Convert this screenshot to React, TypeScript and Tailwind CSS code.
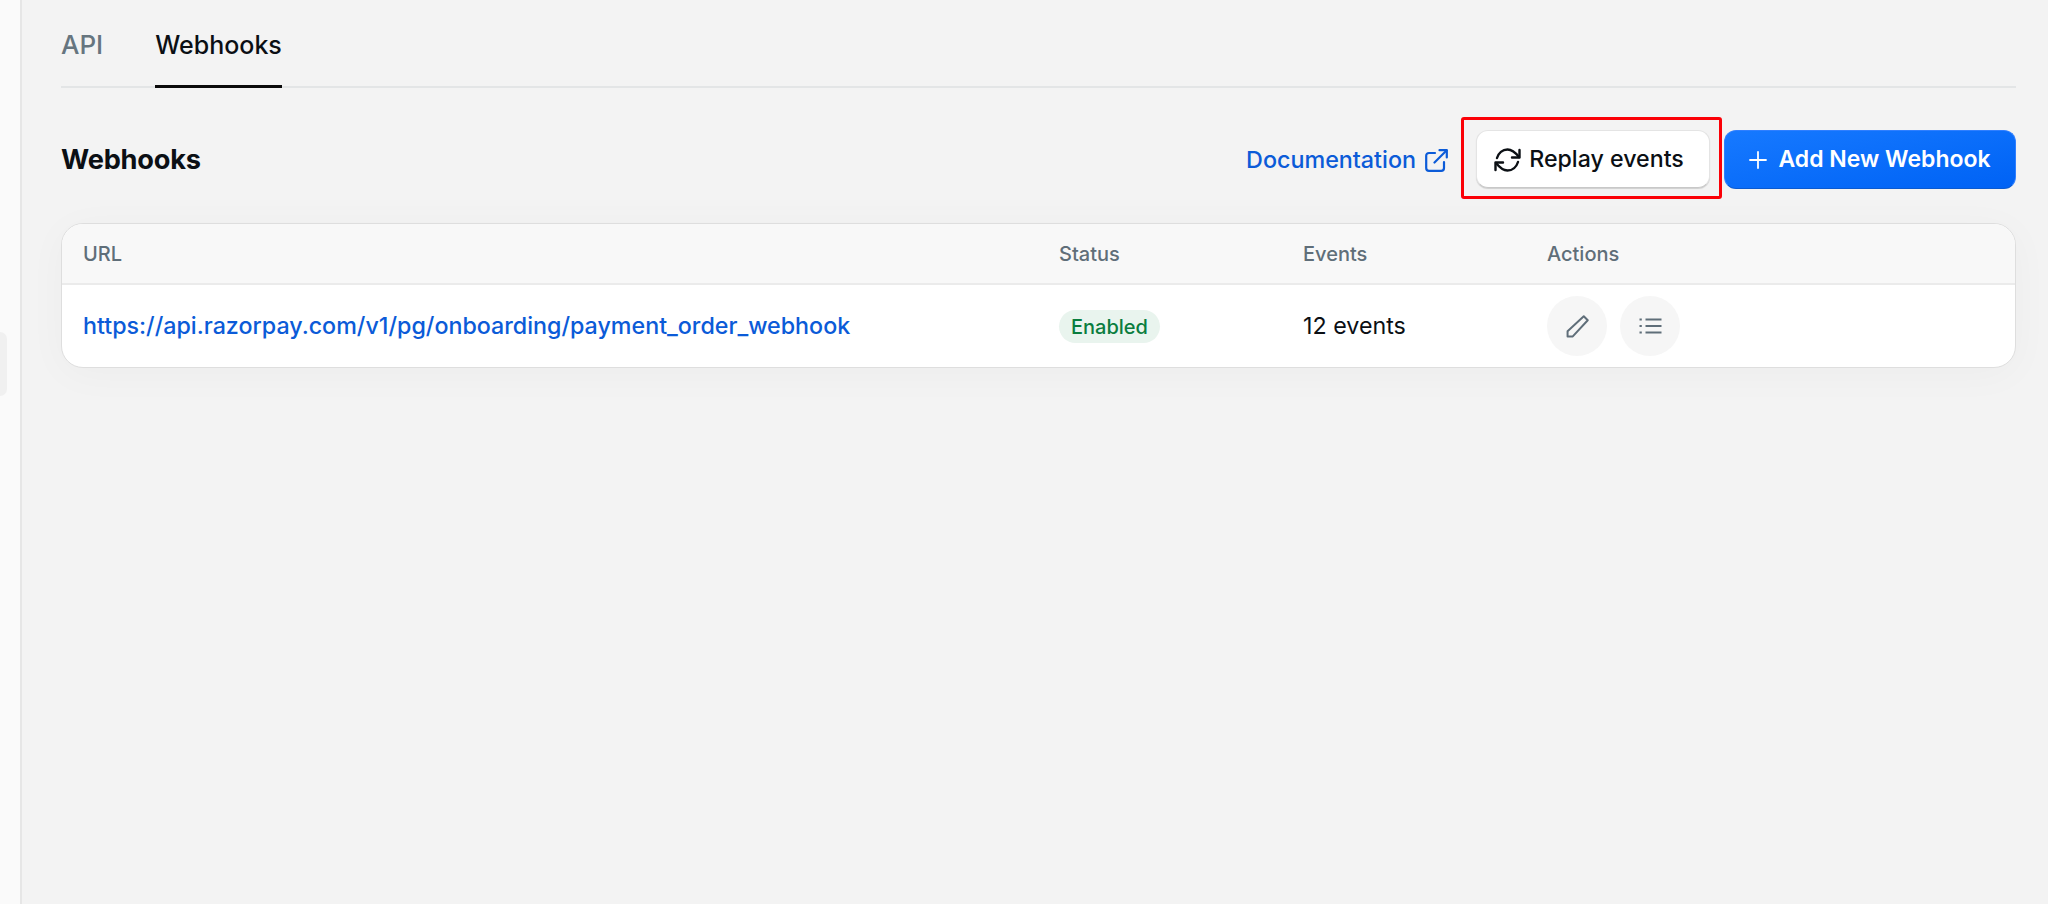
import React from "react";

const rowCols = "grid grid-cols-[975px_244px_244px_1fr]";

function SyncIcon() {
  return (
    <svg width="27" height="24" viewBox="0 0 26 24" fill="none" stroke="currentColor" strokeWidth="2.4" strokeLinecap="round" strokeLinejoin="round">
      <path d="M2.5 10C4 5 8 1.5 13 1.5C17.5 1.5 20.5 4 24.5 9" />
      <path d="M25 2V9.5H17.5" />
      <path d="M23.5 14C22 19 18 22.5 13 22.5C8.5 22.5 5.5 20 1.5 15" />
      <path d="M1 22V14.5H8.5" />
    </svg>
  );
}

function ExternalIcon() {
  return (
    <svg width="23" height="23" viewBox="0 0 23 23" fill="none" stroke="currentColor" strokeWidth="2.2" strokeLinecap="round" strokeLinejoin="round">
      <path d="M10 4H4C2.3 4 1.2 5.1 1.2 6.8V19C1.2 20.7 2.3 21.8 4 21.8H16.2C17.9 21.8 19 20.7 19 19V13" />
      <path d="M14.5 1.2H21.8V8.5" />
      <path d="M9.5 13.5L21.5 1.5" />
    </svg>
  );
}

function PencilIcon() {
  return (
    <svg width="23" height="23" viewBox="0 0 22 22" fill="none" stroke="currentColor" strokeWidth="1.9" strokeLinejoin="round">
      <path d="M17 1.2L20.8 5L6.5 20.5H1.5V15.5Z" />
    </svg>
  );
}

function ListIcon() {
  return (
    <svg width="23" height="16" viewBox="0 0 23 16" fill="none" stroke="currentColor" strokeWidth="1.9">
      <path d="M6.5 1.5H22.5M6.5 8H22.5M6.5 14.5H22.5" />
      <path d="M0.5 1.5H2.8M0.5 8H2.8M0.5 14.5H2.8" />
    </svg>
  );
}

function PlusIcon() {
  return (
    <svg width="18" height="18" viewBox="0 0 18 18" fill="none" stroke="currentColor" strokeWidth="1.8" strokeLinecap="round">
      <path d="M9 1V17M1 9H17" />
    </svg>
  );
}

export default function App() {
  return (
    <div className="flex h-[904px] w-[2048px] overflow-hidden bg-[#f3f3f3] font-['Inter',sans-serif] text-[#0b0f14]">
      <aside className="w-[22px] shrink-0 border-r-2 border-[#e6e6e6] bg-[#fafafa] pt-[332px]">
        <div className="h-[64px] w-[7px] rounded-r-lg bg-[#f0f0f0]" />
      </aside>
      <main className="w-[1994px] pl-[39px]">
        <div className="flex h-[88px] gap-[52px] border-b-2 border-[#e3e5e6]">
          <div className="pt-[27px] text-[26px] leading-[36px] font-medium text-[#66757f]">API</div>
          <div className="-mb-[2px] h-[88px] border-b-[3px] border-[#0a0a0a] pt-[27px] text-[25px] leading-[36px] font-medium">Webhooks</div>
        </div>

        <div className="mt-[42px] flex h-[58px] items-center justify-between">
          <h1 className="pt-[2px] text-[27.2px] font-bold tracking-[-0.2px]">Webhooks</h1>
          <div className="flex items-center">
            <a className="flex items-center gap-[9px] pt-[2px] text-[23.3px] font-medium text-[#0b5bd8]">
              Documentation
              <ExternalIcon />
            </a>
            <div className="relative ml-[28px]">
              <button className="flex h-[58px] w-[234px] items-center justify-center gap-[8px] rounded-xl border border-[#e4e4e4] border-b-[#c8c8c8] bg-white pt-[1px] pr-[8px] text-[23.2px] font-medium shadow-[0_1px_1px_rgba(0,0,0,0.15)]">
                <SyncIcon />
                Replay events
              </button>
              <div className="absolute -top-[13px] -right-[12px] -bottom-[11px] -left-[15px] rounded-[3px] border-[3px] border-[#fb0007]" />
            </div>
            <button className="ml-[14px] flex h-[59px] w-[292px] items-center justify-center gap-[11px] rounded-xl border border-[#2f7fff] border-b-[#0a5ad0] bg-gradient-to-br from-[#1679ff] to-[#0062f5] pt-[1px] text-[23px] font-semibold text-white">
              <PlusIcon />
              Add New Webhook
            </button>
          </div>
        </div>

        <div className="mt-[35px] overflow-hidden rounded-[22px] border border-[#dedede] bg-white shadow-[0_6px_40px_rgba(0,0,0,0.03)]">
          <div className={`${rowCols} h-[61px] items-center border-b-2 border-[#ebebeb] bg-[#f8f8f8] pl-[21px] text-[20px] font-medium text-[#5f6e79]`}>
            <div>URL</div>
            <div className="pl-[1px]">Status</div>
            <div className="pl-[1px]">Events</div>
            <div className="pl-[1px]">Actions</div>
          </div>
          <div className={`${rowCols} h-[82px] items-center pl-[21px] text-[23.25px]`}>
            <a className="font-medium whitespace-nowrap text-[#0b5bd8]">https://api.razorpay.com/v1/pg/onboarding/payment_order_webhook</a>
            <div className="pl-[1px]">
              <span className="inline-flex h-[33px] w-[101px] items-center justify-center rounded-full bg-[#e9f4ee] text-[20px] font-medium text-[#0a7d3e]">Enabled</span>
            </div>
            <div className="pl-[1px] font-normal">12 events</div>
            <div className="flex gap-[13px] pl-[1px]">
              <button className="flex size-[60px] items-center justify-center rounded-full bg-[#f6f6f6] text-[#5f6e79]">
                <PencilIcon />
              </button>
              <button className="flex size-[60px] items-center justify-center rounded-full bg-[#f6f6f6] text-[#5f6e79]">
                <ListIcon />
              </button>
            </div>
          </div>
        </div>
      </main>
    </div>
  );
}
